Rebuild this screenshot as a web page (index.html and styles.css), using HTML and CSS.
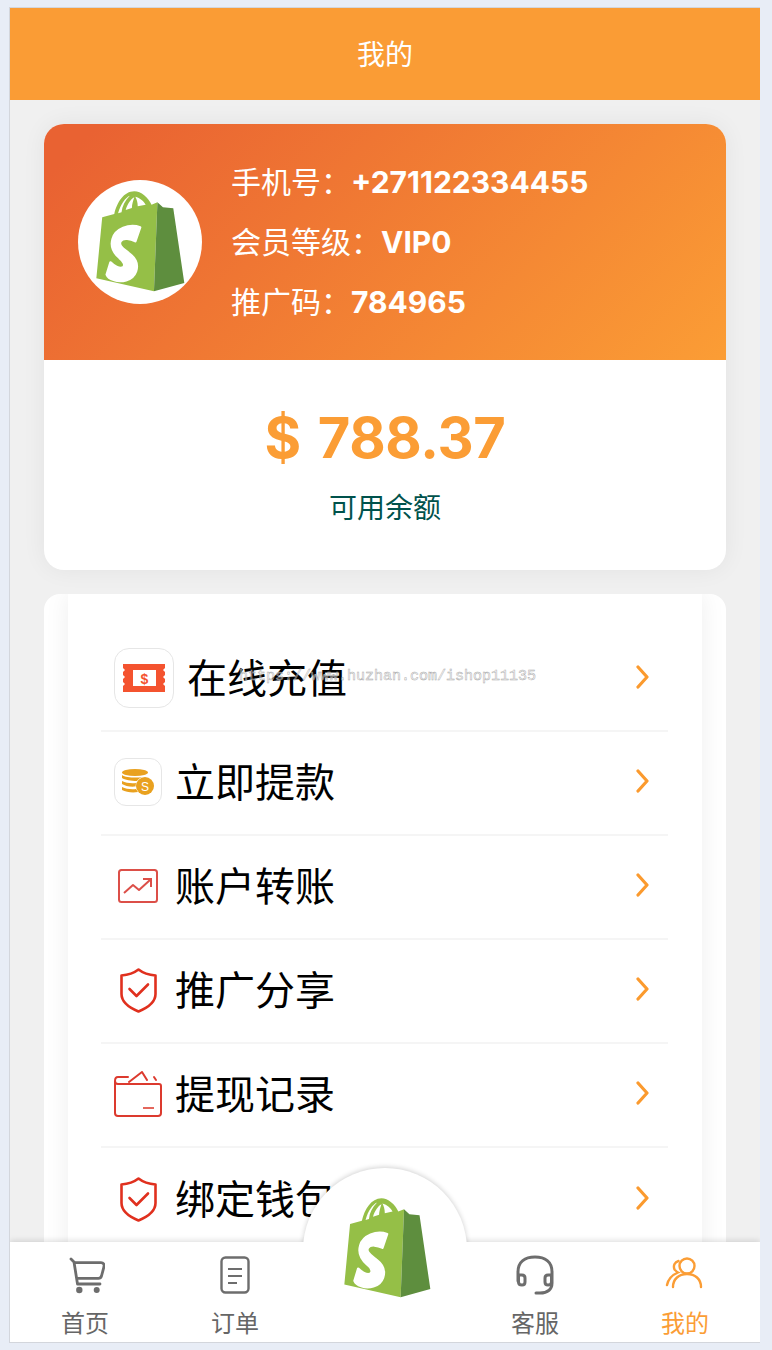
FILE: index.html
```html
<!DOCTYPE html>
<html>
<head>
    <meta charset="utf-8">
    <title>我的</title>
    <link rel="stylesheet" href="styles.css">
</head>
<body>
    <svg class="defs" width="0" height="0">
        <symbol id="bag" viewBox="44 18 258 306" preserveAspectRatio="none">
            <path fill="#95bf47" d="M45 283 L62 100 L97 90 C105 55 125 22 155 22 C175 22 195 40 205 62 L222 55 L212 322 Z"/>
            <path fill="#5e8e3e" d="M222 55 L238 70 L268 73 L300 297 L212 322 Z"/>
            <path fill="#fff" d="M108 88 C115 60 130 40 142 35 C128 50 120 65 118 85 Z M130 78 C135 60 145 45 155 40 C152 50 148 62 148 72 Z M165 67 C165 55 162 45 158 38 C172 42 183 52 188 62 Z"/>
            <path fill="#fff" stroke="#fff" stroke-width="7" stroke-linejoin="round" d="M172 130 L158 172 C145 165 122 160 115 172 C108 185 125 195 140 208 C158 222 168 238 160 262 C150 292 115 295 95 288 C85 285 78 280 75 272 L86 235 C95 245 112 255 122 250 C130 245 125 232 112 222 C95 207 85 190 92 165 C100 135 140 118 172 130 Z"/>
        </symbol>
        <symbol id="shield" viewBox="0 0 37 45">
            <path fill="none" stroke="#e0301e" stroke-width="2.6" stroke-linejoin="round" d="M18.5 1.5 C23 5 29 7 35.5 7.5 V26 C35.5 34 27 40 18.5 43.5 C10 40 1.5 34 1.5 26 V7.5 C8 7 14 5 18.5 1.5 Z"/>
            <path fill="none" stroke="#e0301e" stroke-width="2.6" stroke-linecap="round" stroke-linejoin="round" d="M9.5 21 L16.5 28 L28 16.5"/>
        </symbol>
        <symbol id="chevron" viewBox="0 0 13 24">
            <path fill="none" stroke="#fb9a2e" stroke-width="3.2" stroke-linecap="round" stroke-linejoin="round" d="M2 2 L11 12 L2 22"/>
        </symbol>
    </svg>

    <div class="app">
        <header class="topbar">我的</header>

        <main class="content">
            <section class="account">
                <div class="account-head">
                    <div class="avatar">
                        <svg class="avatar-bag"><use href="#bag"/></svg>
                    </div>
                    <ul class="account-info">
                        <li>手机号：<b>+271122334455</b></li>
                        <li>会员等级：<b>VIP0</b></li>
                        <li>推广码：<b>784965</b></li>
                    </ul>
                </div>
                <div class="balance">
                    <div class="balance-num">$ 788.37</div>
                    <div class="balance-label">可用余额</div>
                </div>
            </section>

            <section class="menu">
                <div class="menu-inner">
                    <a class="menu-row">
                        <span class="icon-tile icon-tile-big">
                            <svg width="42" height="28" viewBox="0 0 42 28">
                                <path fill="#f4532f" d="M0 0 H42 V4 L40 6 L42 8 V11 L40 13 L42 15 V18 L40 20 L42 22 V28 H0 V22 L2 20 L0 18 V15 L2 13 L0 11 V8 L2 6 L0 4 Z"/>
                                <rect fill="#fff" x="10" y="6" width="23" height="16"/>
                                <text class="ticket-sign" x="21.5" y="19.500" text-anchor="middle">$</text>
                            </svg>
                        </span>
                        <span class="menu-text">在线充值</span>
                        <svg class="chevron"><use href="#chevron"/></svg>
                    </a>
                    <a class="menu-row">
                        <span class="icon-tile">
                            <svg width="32" height="26" viewBox="0 0 32 26">
                                <ellipse fill="#e9a11f" cx="13" cy="3.5" rx="13" ry="3.5"/>
                                <path fill="#e9a11f" d="M0 6 C4 9 16 9 20 8 C18 9 16 10 15 12 C9 12 3 11 0 9 Z M0 12 C4 14 9 14.500 14 14 L13.500 17.500 C8 18 3 17 0 15 Z M0 18 C4 20 9 20.500 14 20 L16 23 C10 24 4 23 0 21 Z"/>
                                <circle fill="#e9a11f" cx="23" cy="17" r="9"/>
                                <text class="coin-sign" x="23" y="21.500" text-anchor="middle">S</text>
                            </svg>
                        </span>
                        <span class="menu-text">立即提款</span>
                        <svg class="chevron"><use href="#chevron"/></svg>
                    </a>
                    <a class="menu-row">
                        <span class="icon-box">
                            <svg width="40" height="34" viewBox="0 0 40 34">
                                <rect x="1" y="1" width="38" height="32" rx="2.500" fill="none" stroke="#dc4f48" stroke-width="2"/>
                                <path fill="none" stroke="#dc4f48" stroke-width="2" stroke-linejoin="round" d="M6 24 L15 16 L21 21 L32 11"/>
                                <path fill="none" stroke="#dc4f48" stroke-width="2" d="M25 10 H33 V18"/>
                            </svg>
                        </span>
                        <span class="menu-text">账户转账</span>
                        <svg class="chevron"><use href="#chevron"/></svg>
                    </a>
                    <a class="menu-row">
                        <span class="icon-box"><svg class="shield"><use href="#shield"/></svg></span>
                        <span class="menu-text">推广分享</span>
                        <svg class="chevron"><use href="#chevron"/></svg>
                    </a>
                    <a class="menu-row">
                        <span class="icon-box">
                            <svg width="48" height="46" viewBox="0 0 48 46">
                                <path fill="none" stroke="#dc3a2e" stroke-width="2" stroke-linecap="round" stroke-linejoin="round" d="M14 6 H4 C2 6 1 8 1 10 V42 C1 44 2 45 4 45 H44 C46 45 47 44 47 42 V15 C47 14 46 13 45 13 H4 C2 13 1 12 1 10"/>
                                <path fill="none" stroke="#dc3a2e" stroke-width="2" stroke-linecap="round" stroke-linejoin="round" d="M15 11 L28 1 L33 9"/>
                                <path fill="none" stroke="#dc3a2e" stroke-width="2" stroke-linecap="round" d="M40 6 L42 9"/>
                                <path fill="none" stroke="#e4675c" stroke-width="2" d="M29 37 H40"/>
                            </svg>
                        </span>
                        <span class="menu-text">提现记录</span>
                        <svg class="chevron"><use href="#chevron"/></svg>
                    </a>
                    <a class="menu-row">
                        <span class="icon-box"><svg class="shield"><use href="#shield"/></svg></span>
                        <span class="menu-text">绑定钱包</span>
                        <svg class="chevron"><use href="#chevron"/></svg>
                    </a>
                </div>
            </section>
        </main>

        <div class="watermark">https://www.huzhan.com/ishop11135</div>

        <nav class="tabbar">
            <a class="tab">
                <svg class="tab-icon" viewBox="0 0 40 40">
                    <path fill="none" stroke="#6d6d6d" stroke-width="2.800" stroke-linecap="round" stroke-linejoin="round" d="M6 4 L9 7 L12.500 29 H35"/>
                    <path fill="none" stroke="#6d6d6d" stroke-width="2.800" stroke-linejoin="round" d="M10 7.700 H36 C38.500 7.700 39.500 9.500 39 11.700 L36.500 21 C36 22.500 35.500 23.300 33.500 23.300 H11.700"/>
                    <circle fill="#6d6d6d" cx="14.300" cy="35" r="3.200"/>
                    <circle fill="#6d6d6d" cx="31.700" cy="35" r="3"/>
                </svg>
                <span>首页</span>
            </a>
            <a class="tab">
                <svg class="tab-icon" viewBox="0 0 40 40">
                    <rect x="6.500" y="2.500" width="27" height="35" rx="4" fill="none" stroke="#6d6d6d" stroke-width="2.400"/>
                    <path fill="none" stroke="#6d6d6d" stroke-width="2" d="M13 14 H27 M13 21 H27 M13 28 H22"/>
                </svg>
                <span>订单</span>
            </a>
            <div class="tab tab-center">
                <div class="bump"></div>
                <svg class="bump-bag"><use href="#bag"/></svg>
            </div>
            <a class="tab">
                <svg class="tab-icon" viewBox="0 0 40 40">
                    <path fill="none" stroke="#6d6d6d" stroke-width="3" stroke-linecap="round" d="M3 26 V17 C3 7 10 2 20 2 C30 2 37 7 37 17 V28 C37 34 33 38 25 38 H21"/>
                    <path fill="none" stroke="#6d6d6d" stroke-width="3" d="M3.500 20 H7 C9 20 10 21 10 23 V27 C10 29 9 30 7 30 C5 30 3.500 29 3.500 27 Z M36.500 20 H33 C31 20 30 21 30 23 V27 C30 29 31 30 33 30 C35 30 36.500 29 36.500 27 Z"/>
                </svg>
                <span>客服</span>
            </a>
            <a class="tab tab-active">
                <svg class="tab-icon" viewBox="0 0 40 40">
                    <circle cx="22" cy="11" r="7.500" fill="none" stroke="#fb9d35" stroke-width="2.400"/>
                    <path fill="none" stroke="#fb9d35" stroke-width="2.400" stroke-linecap="round" d="M8 32 C8 24 14 19 22 19 C30 19 36 24 36 32"/>
                    <path fill="none" stroke="#fb9d35" stroke-width="2.400" stroke-linecap="round" d="M13.500 6 C9.500 7 8 11 9.500 14.500 C11 16 12 17 13 17.500 C7 20 3 25 2 30"/>
                </svg>
                <span>我的</span>
            </a>
        </nav>
    </div>
</body>
</html>
```

FILE: styles.css
```css
html, body {
    height: 100%;
}
body {
    margin: 0;
    padding: 7px 0 0 9px;
    box-sizing: border-box;
    background-color: #e8edf6;
    font-family: "Noto Sans CJK SC", "Liberation Sans", sans-serif;
    overflow: hidden;
}
.defs {
    position: absolute;
}
a {
    color: inherit;
    text-decoration: none;
}
ul {
    list-style: none;
    margin: 0;
    padding: 0;
}

.app {
    position: relative;
    width: 751px;
    height: 1336px;
    box-sizing: border-box;
    border: 1px solid #d3d6dc;
    border-right: none;
    background-color: #f0f0f0;
    overflow: hidden;
    display: flex;
    flex-direction: column;
}

.topbar {
    flex: none;
    height: 92px;
    line-height: 90px;
    background-color: #fa9c35;
    color: #fff;
    font-size: 28px;
    text-align: center;
}

.content {
    flex: 1;
    min-height: 0;
    padding: 24px 34px 0;
}

.account {
    border-radius: 20px;
    background-color: #fff;
    box-shadow: 0 0 24px rgba(0, 0, 0, 0.06);
    overflow: hidden;
}
.account-head {
    height: 236px;
    padding: 0 34px;
    background: linear-gradient(135deg, #e96232 6%, #fb9d35 100%);
    display: flex;
    align-items: center;
    gap: 29px;
}
.avatar {
    flex: none;
    width: 124px;
    height: 124px;
    border-radius: 50%;
    background-color: #fff;
    display: flex;
    align-items: center;
    justify-content: center;
}
.avatar-bag {
    width: 89px;
    height: 102px;
    margin-top: -2px;
}
.account-info {
    color: #fff;
    font-size: 30px;
    line-height: 60px;
    margin-bottom: 4px;
}
.account-info li {
    height: 60px;
}
.account-info b {
    font-family: Inter, "Liberation Sans", sans-serif;
    font-weight: 700;
}

.balance {
    height: 210px;
    text-align: center;
    box-sizing: border-box;
    padding-top: 40px;
}
.balance-num {
    font-family: Inter, "Liberation Sans", sans-serif;
    font-weight: 700;
    font-size: 56px;
    line-height: 76px;
    word-spacing: 4px;
    letter-spacing: -0.3px;
    color: #fb9d35;
}
.balance-label {
    font-size: 28px;
    line-height: 40px;
    margin-top: 10px;
    color: #00524c;
}

.menu {
    margin-top: 24px;
    padding: 0 24px;
    border-radius: 16px 16px 0 0;
    background-color: #fff;
    height: 800px;
    overflow: hidden;
}
.menu-inner {
    height: 100%;
    box-sizing: border-box;
    padding: 34px 34px 0 33px;
    background-color: #fff;
    box-shadow: 0 0 24px rgba(0, 0, 0, 0.07);
}
.menu-row {
    display: flex;
    align-items: center;
    gap: 13px;
    height: 104px;
    box-sizing: border-box;
    padding: 0 19px 4px 13px;
    border-bottom: 2px solid #f5f5f5;
}
.menu-row:last-child {
    border-bottom: none;
}
.menu-text {
    flex: 1;
    font-size: 40px;
    line-height: 56px;
    margin-bottom: 2px;
    color: #000;
}
.icon-tile, .icon-box {
    flex: none;
    width: 48px;
    height: 48px;
    margin-top: 2px;
    display: flex;
    align-items: center;
    justify-content: center;
}
.icon-tile {
    box-sizing: border-box;
    border: 1px solid #e6e6e6;
    border-radius: 12px;
}
.icon-tile-big {
    width: 60px;
    height: 60px;
    border-radius: 15px;
}
.ticket-sign {
    font-family: "Liberation Sans", sans-serif;
    font-size: 14px;
    font-weight: 700;
    fill: #f4532f;
}
.coin-sign {
    font-family: "Liberation Sans", sans-serif;
    font-size: 12px;
    fill: #fff;
}
.shield {
    width: 37px;
    height: 45px;
}
.chevron {
    flex: none;
    width: 13px;
    height: 24px;
}

.watermark {
    position: absolute;
    left: 229px;
    top: 659px;
    font-family: "Liberation Mono", monospace;
    font-size: 15px;
    line-height: 20px;
    color: rgba(255, 255, 255, 0.3);
    -webkit-text-stroke: 0.5px #aaa;
}

.tabbar {
    position: absolute;
    left: 0;
    right: 0;
    bottom: 0;
    height: 100px;
    background-color: #fff;
    box-shadow: 0 -1px 6px rgba(0, 0, 0, 0.15);
    display: flex;
}
.tab {
    position: relative;
    flex: 1;
    display: flex;
    flex-direction: column;
    align-items: center;
    color: #666;
    font-size: 24px;
    line-height: 34px;
    padding-top: 13px;
    box-sizing: border-box;
}
.tab-icon {
    width: 40px;
    height: 40px;
    margin-bottom: 10px;
}
.tab-active {
    color: #fb9d35;
}
.bump {
    position: absolute;
    left: -7px;
    top: -74px;
    width: 164px;
    height: 164px;
    border-radius: 50%;
    background: #fff;
    box-shadow: 0 -1px 5px rgba(0, 0, 0, 0.18);
    clip-path: inset(-10px -10px 90px -10px);
}
.bump-bag {
    position: absolute;
    left: 34px;
    top: -45px;
    width: 87px;
    height: 101px;
}
```
